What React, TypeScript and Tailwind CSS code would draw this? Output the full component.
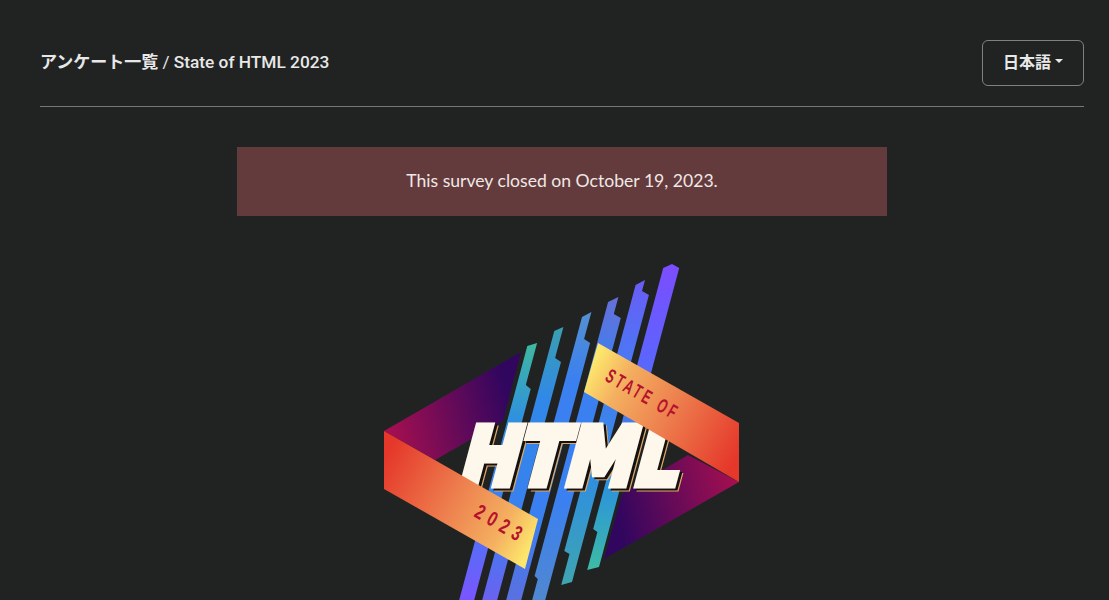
const stripes = [
  { id: 's1', l: 620, r: 635, n: 629, tip: 343, left: 346, step: 385, end: 640, stops: [['343', '#3fb8a0'], ['420', '#2f90e0'], ['500', '#3a80f0'], ['600', '#7a55ff']] },
  { id: 's2', l: 643, r: 658, n: 651, tip: 327, left: 331, step: 358, end: 640, stops: [['327', '#3aa0b0'], ['400', '#3088e8'], ['520', '#3a80f0'], ['600', '#6a62f0']] },
  { id: 's3', l: 667, r: 682, n: 675, tip: 312, left: 317, step: 339, end: 640, stops: [['312', '#5590d0'], ['380', '#3a80f0'], ['520', '#3a80f0'], ['600', '#5a70e0']] },
  { id: 's4', l: 689, r: 706, n: 698, tip: 297, left: 302, step: 314, end: 640, low: 693, lowStep: 576, stops: [['297', '#6670d8'], ['370', '#3a80f0'], ['500', '#3a80f0'], ['600', '#5088d0']] },
  { id: 's5', l: 712, r: 728, n: 720, tip: 280, left: 285, step: 291, end: 585, low: 718, lowStep: 551, stops: [['280', '#6a5cf5'], ['360', '#4a78f5'], ['480', '#2f8fe0'], ['585', '#3fa5b0']] },
  { id: 's6', l: 735, r: 751, n: 751, tip: 264, left: 268, step: 268, end: 570, low: 740, lowStep: 529, stops: [['265', '#7c4dff'], ['350', '#5f62ff'], ['480', '#2a90e0'], ['570', '#3dbba5']] },
];
const K = 0.268;
const at = (c: number, y: number) => `${(c - K * y).toFixed(1)},${y}`;

function stripePoints(s: (typeof stripes)[number]) {
  const pts: string[] = [];
  pts.push(at(s.l, s.left));
  pts.push(at(s.n, s.tip));
  if (s.n !== s.r) {
    pts.push(at(s.n, s.step));
    pts.push(at(s.r, s.step + 4));
  } else {
    pts.length = 0;
    pts.push(at(s.l, s.left));
    pts.push(`672,${s.tip}`);
    pts.push(at(s.r, s.left));
  }
  const lowEdge = s.low ?? s.l;
  pts.push(at(s.r, s.end - 3));
  pts.push(at(lowEdge, s.end));
  if (s.low) {
    pts.push(at(s.low, s.lowStep + 3));
    pts.push(at(s.l, s.lowStep));
  }
  return pts.join(' ');
}

function Logo() {
  const word = (fill: string, dx: number, dy: number, stroke: string) => (
    <text
      transform={`translate(${456 + dx} ${485 + dy}) skewX(-15)`}
      fontFamily='"DejaVu Sans", sans-serif'
      fontWeight={700}
      fontSize={81}
      fill={fill}
      stroke={stroke}
      strokeWidth={7}
      strokeLinejoin="miter"
      textLength={219}
      lengthAdjust="spacingAndGlyphs"
    >
      HTML
    </text>
  );
  return (
    <svg viewBox="362 256 400 400" className="block w-[400px] h-[400px] mx-auto mt-10 shrink-0">
      <defs>
        <linearGradient id="triL" gradientUnits="userSpaceOnUse" x1="390" y1="430" x2="510" y2="400">
          <stop offset="0" stopColor="#a30f50" />
          <stop offset="1" stopColor="#30065f" />
        </linearGradient>
        <linearGradient id="triR" gradientUnits="userSpaceOnUse" x1="615" y1="510" x2="735" y2="480">
          <stop offset="0" stopColor="#30065f" />
          <stop offset="1" stopColor="#a30f50" />
        </linearGradient>
        <linearGradient id="ribL" gradientUnits="userSpaceOnUse" x1="384" y1="460" x2="532" y2="545">
          <stop offset="0" stopColor="#e5382b" />
          <stop offset="0.5" stopColor="#ee8450" />
          <stop offset="0.8" stopColor="#f4b060" />
          <stop offset="1" stopColor="#fde66c" />
        </linearGradient>
        <linearGradient id="ribR" gradientUnits="userSpaceOnUse" x1="739" y1="452" x2="591" y2="367">
          <stop offset="0" stopColor="#e5382b" />
          <stop offset="0.5" stopColor="#ee8450" />
          <stop offset="0.8" stopColor="#f4b060" />
          <stop offset="1" stopColor="#fde66c" />
        </linearGradient>
        <linearGradient id="cream" gradientUnits="userSpaceOnUse" x1="458" y1="450" x2="680" y2="470">
          <stop offset="0" stopColor="#fdf7ec" />
          <stop offset="1" stopColor="#fde4bf" />
        </linearGradient>
        {stripes.map((s) => (
          <linearGradient key={s.id} id={s.id} gradientUnits="userSpaceOnUse" x1="0" y1={s.stops[0][0]} x2="0" y2={s.stops[3][0]}>
            {s.stops.map(([y, c], i) => (
              <stop key={i} offset={(Number(y) - Number(s.stops[0][0])) / (Number(s.stops[3][0]) - Number(s.stops[0][0]))} stopColor={c} />
            ))}
          </linearGradient>
        ))}
      </defs>
      <polygon points="384,431 521,352 503,421 435,460" fill="url(#triL)" />
      <polygon points="739,482 604,559 622,494 688,455" fill="url(#triR)" />
      {stripes.map((s) => (
        <polygon key={s.id} points={stripePoints(s)} fill={`url(#${s.id})`} />
      ))}
      {word('#e0a868', 3.4, 2.8, '#e0a868')}
      {word('#14110f', 2.4, 2, '#14110f')}
      {word('url(#cream)', 0, 0, 'url(#cream)')}
      <polygon points="384,431 538,519 525,569 384,489" fill="url(#ribL)" />
      <polygon points="598,343 739,423 739,482 584,392" fill="url(#ribR)" />
      <text
        transform="translate(604 380) rotate(30) scale(0.6 1)"
        fontFamily='"Liberation Sans", sans-serif'
        fontWeight={700}
        fontSize={20}
        letterSpacing={5}
        fill="#b5122e"
      >
        STATE OF
      </text>
      <text
        transform="translate(473 516) rotate(30) scale(0.72 1)"
        fontFamily='"Liberation Sans", sans-serif'
        fontWeight={700}
        fontSize={21}
        letterSpacing={8}
        fill="#b5122e"
      >
        2023
      </text>
    </svg>
  );
}

export default function App() {
  return (
    <div className="h-[600px] overflow-hidden bg-[#212323] pt-10 pl-10 pr-[25px] text-[#e8e8e8] font-['Lato','Noto_Sans_CJK_JP',sans-serif]">
      <header className="flex items-center justify-between pb-5 border-b border-[#777777]">
        <div className="text-[17px] font-bold leading-6 font-['Roboto','Noto_Sans_CJK_JP',sans-serif] -mt-[2px]">
          <span>アンケート一覧</span>
          <span className="font-normal"> / </span>
          <span className="font-medium text-[17.3px]">State of HTML 2023</span>
        </div>
        <button className="flex items-center justify-center gap-[4px] w-[102px] h-[46px] pb-1 rounded-md border border-[#808080] text-[16px] font-bold font-['Noto_Sans_CJK_JP',sans-serif]">
          日本語
          <span className="w-0 h-0 border-x-4 border-x-transparent border-t-4 border-t-[#e8e8e8]" />
        </button>
      </header>
      <div className="mx-auto mt-10 flex h-[69px] w-[650px] items-center justify-center bg-[#633b3c] text-[17.6px] text-[#f0e8e6]">
        This survey closed on October 19, 2023.
      </div>
      <Logo />
    </div>
  );
}
